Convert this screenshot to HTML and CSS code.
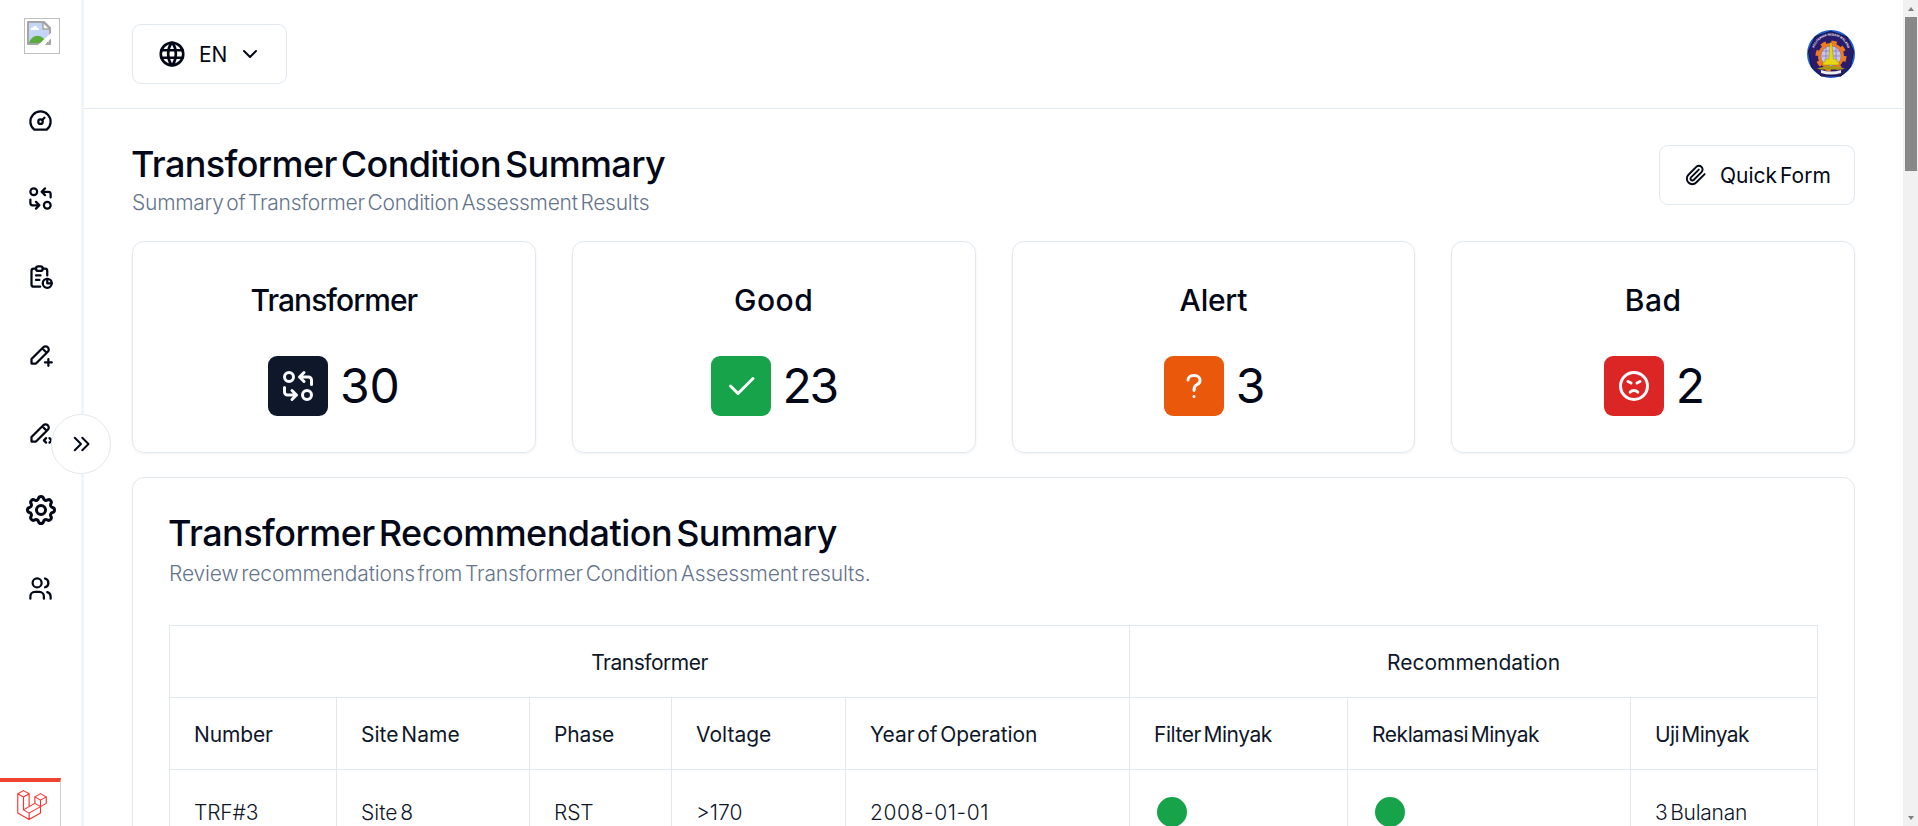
FILE: index.html
```html
<!DOCTYPE html>
<html lang="en">
<head>
<meta charset="utf-8">
<title>Transformer Condition Summary</title>
<link rel="stylesheet" href="styles.css">
</head>
<body>
<div class="app">
  <aside class="sidebar">
    <div class="logo">
      <svg class="broken" viewBox="0 0 24 24"><path d="M1 1h16l6 6v16H1z" fill="#c3d6f7"/><path d="M3.500 9c0-2.500 2.500-2.500 2.500-2.500 1-2.500 4.500-1.500 4.500.5 2 0 2 2 1 2z" fill="#fff"/><path d="M2 22c2-7 10-10 15-4l5 4z" fill="#5aad3c"/><path d="M1 1h16l6 6v16H1z" fill="none" stroke="#a5a5a5" stroke-width="2"/><path d="M16 1v7h7z" fill="#fff" stroke="#a5a5a5" stroke-width="1.5"/><path d="M25 11v5l-8 9h-7z" fill="#fff"/></svg>
    </div>
    <nav class="nav">
      <svg class="ico" viewBox="0 0 24 24"><circle cx="12" cy="13" r="2"/><path d="M13.45 11.55l2.05-2.05M6.4 20a9 9 0 1 1 11.2 0z"/></svg>
      <svg class="ico" viewBox="0 0 24 24"><path d="M3 6a3 3 0 1 0 6 0a3 3 0 0 0-6 0M21 11V8a2 2 0 0 0-2-2h-6l3 3m0-6l-3 3M3 13v3a2 2 0 0 0 2 2h6l-3-3m0 6l3-3M15 18a3 3 0 1 0 6 0a3 3 0 0 0-6 0"/></svg>
      <svg class="ico" viewBox="0 0 24 24"><path d="M8 5H6a2 2 0 0 0-2 2v12a2 2 0 0 0 2 2h5.697M18 14v4h4M18 11V7a2 2 0 0 0-2-2h-2M8 11h4M8 15h3"/><rect x="8" y="3" width="6" height="4" rx="2"/><circle cx="18" cy="18" r="4"/></svg>
      <svg class="ico" viewBox="0 0 24 24"><path d="M4 20h4L18.500 9.500a2.828 2.828 0 1 0-4-4L4 16v4M13.500 6.500l4 4M16 19h6M19 16v6"/></svg>
      <svg class="ico" viewBox="0 0 24 24"><path d="M4 20h4L18.500 9.500a2.828 2.828 0 1 0-4-4L4 16v4M13.500 6.500l4 4M20 21l2-2-2-2M17 17l-2 2 2 2"/></svg>
      <svg class="ico big" viewBox="0 0 24 24"><path d="M10.325 4.317c.426-1.756 2.924-1.756 3.350 0a1.724 1.724 0 0 0 2.573 1.066c1.543-.94 3.310.826 2.370 2.370a1.724 1.724 0 0 0 1.065 2.572c1.756.426 1.756 2.924 0 3.350a1.724 1.724 0 0 0-1.066 2.573c.94 1.543-.826 3.310-2.370 2.370a1.724 1.724 0 0 0-2.572 1.065c-.426 1.756-2.924 1.756-3.350 0a1.724 1.724 0 0 0-2.573-1.066c-1.543.94-3.310-.826-2.370-2.370a1.724 1.724 0 0 0-1.065-2.572c-1.756-.426-1.756-2.924 0-3.350a1.724 1.724 0 0 0 1.066-2.573c-.94-1.543.826-3.310 2.370-2.370 1 .608 2.296.07 2.572-1.065z"/><circle cx="12" cy="12" r="3"/></svg>
      <svg class="ico" viewBox="0 0 24 24"><circle cx="9" cy="7" r="4"/><path d="M3 21v-2a4 4 0 0 1 4-4h4a4 4 0 0 1 4 4v2M16 3.130a4 4 0 0 1 0 7.750M21 21v-2a4 4 0 0 0-3-3.850"/></svg>
    </nav>
    <button class="expand"><svg viewBox="0 0 24 24"><path d="M7 7l5 5-5 5M13 7l5 5-5 5"/></svg></button>
    <div class="debugbar">
      <svg viewBox="0 0 24 24"><path d="M5.200.500L.600 3v15.400l9.100 5.200 9.100-5.200v-5.100l4.600-2.600V5.500l-4.600-2.600-4.500 2.600v5.200l-4.600 2.600V3L5.200.500M.600 3l4.600 2.600L9.700 3M5.200 5.600v10.300l4.500 2.600 9.100-5.200-4.500-2.600M9.700 13.300l-4.500 2.600M9.700 18.500v5.100M14.300 5.500l4.500 2.600 4.600-2.600M18.800 8.100v5.200"/></svg>
    </div>
  </aside>
  <main class="main">
    <header class="topbar">
      <button class="btn lang">
        <svg class="globe" viewBox="0 0 24 24"><circle cx="12" cy="12" r="9"/><path d="M3.600 9h16.800M3.600 15h16.800M11.500 3a17 17 0 0 0 0 18M12.500 3a17 17 0 0 1 0 18"/></svg>
        <span class="en">EN</span>
        <svg class="chev" viewBox="0 0 24 24"><path d="M6 9l6 6 6-6"/></svg>
      </button>
      <svg class="avatar" viewBox="0 0 48 48">
        <defs><path id="arc" d="M6.500 23a17.500 17.500 0 0 1 35 0"/></defs>
        <circle cx="24" cy="24" r="24" fill="#1f5fd0"/>
        <path d="M24 1.500L40 7l6.500 14-3 16L34 46H14L4.500 37l-3-16L8 7z" fill="#2a1c6b" stroke="#14123f" stroke-width="1"/>
        <circle cx="24" cy="26" r="13.500" fill="none" stroke="#ee7a22" stroke-width="4" stroke-dasharray="5.300 5.300" stroke-linecap="butt"/>
        <circle cx="24" cy="26" r="11.500" fill="none" stroke="#ee7a22" stroke-width="3"/>
        <circle cx="24" cy="26" r="10" fill="#c9c5ea"/>
        <path d="M14 26h20M15 21h18M19 17v16M29 17v16" stroke="#6f6ab5" stroke-width=".6"/>
        <path d="M23.300 12.500h1.400L26.500 29H30v3h2v3H16v-3h2v-3h3.500z" fill="#e6d812" stroke="#7d7410" stroke-width=".4"/>
        <path d="M10 38.500q14-5 28 0l-3 1H13z" fill="#a69a12"/>
        <path d="M14 40q10 3 20 0v3q-10 3-20 0z" fill="#eee"/>
        <text class="seal"><textPath href="#arc" startOffset="50%" text-anchor="middle">POLITEKNIK NEGERI MALANG</textPath></text>
      </svg>
    </header>
    <div class="content">
      <section class="heading">
        <div>
          <h1 class="h h-cond">Transformer Condition Summary</h1>
          <p class="sub sub-cond">Summary of Transformer Condition Assessment Results</p>
        </div>
        <button class="btn quick">
          <svg class="clip" viewBox="0 0 24 24"><path d="M21.440 11.050l-9.190 9.190a6 6 0 0 1-8.490-8.490l8.570-8.570A4 4 0 1 1 18 8.840l-8.590 8.570a2 2 0 0 1-2.830-2.830l8.490-8.480"/></svg>
          <span>Quick Form</span>
        </button>
      </section>
      <section class="cards">
        <article class="card"><h2 class="ct t-tight">Transformer</h2><div class="stat"><span class="tile navy"><svg viewBox="0 0 24 24"><path d="M3 6a3 3 0 1 0 6 0a3 3 0 0 0-6 0M21 11V8a2 2 0 0 0-2-2h-6l3 3m0-6l-3 3M3 13v3a2 2 0 0 0 2 2h6l-3-3m0 6l3-3M15 18a3 3 0 1 0 6 0a3 3 0 0 0-6 0"/></svg></span><span class="num">30</span></div></article>
        <article class="card"><h2 class="ct t-wide">Good</h2><div class="stat"><span class="tile green"><svg viewBox="0 0 24 24"><path d="M5 12l5 5L20 7"/></svg></span><span class="num n-tight">23</span></div></article>
        <article class="card"><h2 class="ct t-alert">Alert</h2><div class="stat"><span class="tile orange"><svg viewBox="0 0 24 24"><path d="M8 8a3.500 3 0 0 1 3.500-3h1A3.500 3 0 0 1 16 8a3 3 0 0 1-2 3 3 4 0 0 0-2 4M12 19v.010"/></svg></span><span class="num n-tight">3</span></div></article>
        <article class="card"><h2 class="ct t-wide">Bad</h2><div class="stat"><span class="tile red"><svg viewBox="0 0 24 24"><circle cx="12" cy="12" r="9"/><path d="M8 9l2 1M16 9l-2 1M14.500 16.050a3.500 3.500 0 0 0-5 0"/></svg></span><span class="num n-tight">2</span></div></article>
      </section>
      <section class="panel">
        <h2 class="h h-rec">Transformer Recommendation Summary</h2>
        <p class="sub sub-rec">Review recommendations from Transformer Condition Assessment results.</p>
        <table class="grid">
          <colgroup><col class="c1"><col class="c2"><col class="c3"><col class="c4"><col class="c5"><col class="c6"><col class="c7"><col class="c8"></colgroup>
          <thead>
            <tr><th colspan="5" class="group k-trans">Transformer</th><th colspan="3" class="group">Recommendation</th></tr>
            <tr><th class="k-num">Number</th><th>Site Name</th><th class="k-num">Phase</th><th>Voltage</th><th class="k-year">Year of Operation</th><th class="k-minyak">Filter Minyak</th><th class="k-minyak">Reklamasi Minyak</th><th class="k-uji">Uji Minyak</th></tr>
          </thead>
          <tbody>
            <tr><td class="k-num">TRF#3</td><td>Site 8</td><td class="k-num">RST</td><td>&gt;170</td><td class="date">2008-01-01</td><td><i class="dot"></i></td><td><i class="dot"></i></td><td class="k-bulan">3 Bulanan</td></tr>
          </tbody>
        </table>
      </section>
    </div>
  </main>
  <div class="scroll"><i class="up"></i><i class="thumb"></i><i class="down"></i></div>
</div>
</body>
</html>
```
FILE: styles.css
```css
*{box-sizing:border-box}
body{margin:0;font-family:Inter,sans-serif;color:#020817;background:#fff;font-size:21px;overflow:hidden}
h1,h2,p{margin:0}
svg{display:block;flex:none;fill:none;stroke-linecap:round;stroke-linejoin:round}
button{font:inherit;color:inherit;background:#fff;padding:0}
.app{display:flex;height:826px;overflow:hidden}

.sidebar{position:relative;width:84px;flex:none;border-right:3px solid #f1f5f9;display:flex;flex-direction:column;padding-top:18px}
.logo{width:36px;height:36px;border:1px solid #c0c0c0;margin-left:24px;padding:2px}
.broken{width:24px;height:24px}
.nav{display:flex;flex-direction:column;align-items:center;gap:51px;margin-top:53px}
.ico{width:27px;height:27px;stroke:#020817;stroke-width:2}
.big{width:36px;height:36px;margin:-5px 0 -4px}
.expand{position:absolute;left:51px;top:414px;width:60px;height:60px;border:1px solid #e2e8f0;border-radius:50%;display:flex;align-items:center;justify-content:center;z-index:2}
.expand svg{width:30px;height:30px;stroke:#020817;stroke-width:1.6}
.debugbar{position:absolute;left:0;bottom:0;width:61px;height:48px;border-top:4px solid #f0432f;border-right:1px solid #d0d0d0;background:#fff;padding:8px 0 0 17px}
.debugbar svg{width:30px;height:30px;stroke:#f9322c;stroke-width:.9}

.main{flex:1;min-width:0}
.topbar{height:109px;border-bottom:1px solid #e2e8f0;display:flex;align-items:center;justify-content:space-between;padding:0 48px}
.btn{height:60px;border:1px solid #e2e8f0;border-radius:9px;display:flex;align-items:center}
.lang{width:155px;padding-left:24px}
.globe{width:30px;height:30px;stroke:#020817;stroke-width:2.1}
.en{margin:0 11px 0 12px}
.chev{width:24px;height:24px;stroke:#020817;stroke-width:2}
.avatar{width:48px;height:48px}
.seal{font:bold 3px "Liberation Sans",sans-serif;fill:#fff}

.content{padding:36px 48px 0}
.heading{display:flex;justify-content:space-between;height:96px}
.h{font-size:36px;font-weight:500;line-height:38px;word-spacing:-5px;text-indent:-1px}
.h-cond{letter-spacing:-.62px}
.h-rec{letter-spacing:-.53px}
.sub{font-weight:300;color:#64748b;line-height:32px;white-space:nowrap;word-spacing:-3px}
.sub-cond{letter-spacing:-.25px;margin-top:4px}
.sub-rec{letter-spacing:-.14px;margin-top:6px}
.quick{width:196px;padding-left:25px;letter-spacing:0;word-spacing:-3px}
.clip{width:22px;height:22px;stroke:#020817;stroke-width:2.1;margin-right:13px}

.cards{display:grid;grid-template-columns:repeat(4,1fr);gap:36px}
.card{height:212px;border:1px solid #e2e8f0;border-radius:12px;box-shadow:0 1px 3px rgba(0,0,0,.06);display:flex;flex-direction:column;align-items:center;padding-top:40px}
.ct{font-size:30px;font-weight:500;line-height:36px}
.t-tight{letter-spacing:-.95px}
.t-wide{letter-spacing:.5px}
.t-alert{letter-spacing:-.25px}
.stat{display:flex;align-items:center;gap:12px;height:60px;margin-top:38px}
.tile{width:60px;height:60px;border-radius:9px;display:flex;align-items:center;justify-content:center}
.tile svg{width:36px;height:36px;stroke:#f8fafc;stroke-width:2}
.navy{background:#0f172a}
.green{background:#16a34a}
.orange{background:#ea580c}
.red{background:#dc2626}
.num{font-size:48px;line-height:60px}
.n-tight{letter-spacing:-2.4px}

.panel{margin-top:24px;height:700px;border:1px solid #e2e8f0;border-radius:12px;padding:36px 36px 0}
.grid{margin-top:35px;border-collapse:collapse;table-layout:fixed;width:1649px;word-spacing:-3px}
.c1{width:167px}.c2{width:193px}.c3{width:142px}.c4{width:174px}.c5{width:284px}.c6{width:218px}.c7{width:283px}.c8{width:187px}
.grid th,.grid td{border:1px solid #e2e8f0;padding:2px 0 0 24px;text-align:left;white-space:nowrap;font-weight:400;height:72px;color:#0f172a}
.grid td{font-weight:300;height:86px;padding-top:0}
.grid .group{text-align:center;padding-left:0}
.grid .k-num{letter-spacing:-.15px}
.k-trans{letter-spacing:-.5px}
.k-year{letter-spacing:-.08px}
.k-minyak{letter-spacing:-.45px}
.k-uji{letter-spacing:-.6px}
.k-bulan{letter-spacing:-.25px}
.date{letter-spacing:.6px}
.dot{display:block;width:30px;height:30px;border-radius:50%;background:#16a34a;margin:-1px 0 0 3px}

.scroll{width:15px;flex:none;background:#f1f1f1;display:flex;flex-direction:column;align-items:center}
.up,.down{border:3px solid transparent}
.up{border-bottom:4px solid #7f7f7f;border-top:0;margin:7px 0 6px}
.thumb{width:12px;height:154px;background:#888;margin-left:1px}
.down{border-top:4px solid #7f7f7f;border-bottom:0;margin-top:auto;margin-bottom:6px}
```
